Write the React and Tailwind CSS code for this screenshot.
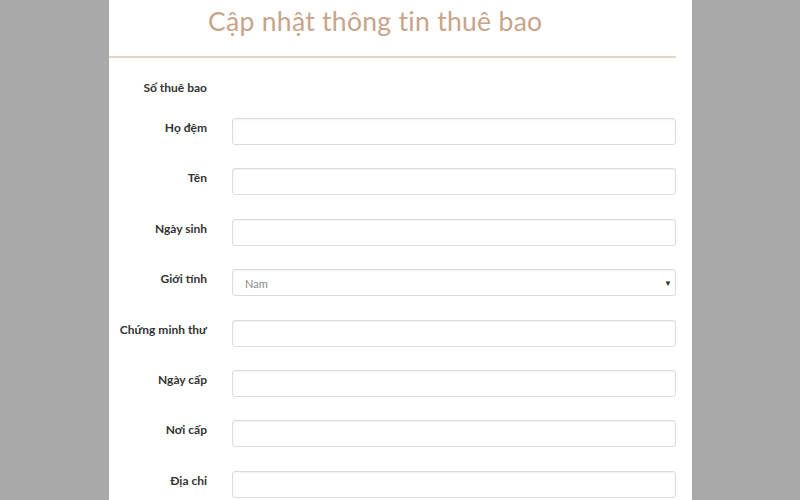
export default function App() {
  const fields = [
    "Họ đệm",
    "Tên",
    "Ngày sinh",
    "Giới tính",
    "Chứng minh thư",
    "Ngày cấp",
    "Nơi cấp",
    "Địa chỉ",
  ];

  return (
    <div className="w-[800px] h-[500px] overflow-hidden bg-[#a9a9a9] font-['Lato',sans-serif]">
      <div className="ml-[109px] w-[583px] h-full bg-white pr-[16px]">
        {/* Header */}
        <div className="h-[58px] border-b-[2px] border-[#e3d4c6] flex items-center pl-[99px] pb-[12px]">
          <h1 className="text-[26.5px] font-normal text-[#c8a48a] tracking-[0.3px]">
            Cập nhật thông tin thuê bao
          </h1>
        </div>

        {/* Form */}
        <div className="flex items-center h-[20px] mt-[20px]">
          <div className="w-[98px] text-right text-[12px] font-bold text-[#333]">
            Số thuê bao
          </div>
        </div>

        <div className="flex flex-col gap-[23.4px] mt-[20px]">
          {fields.map((label) => (
            <div key={label} className="flex items-start">
              <div className="w-[98px] text-right text-[12px] font-bold text-[#333] pt-[1px] whitespace-nowrap">
                {label}
              </div>
              <div className="ml-[25px] flex-1 h-[27px] border border-[#dcdcdc] rounded-[3px] shadow-[inset_0_1px_2px_rgba(0,0,0,0.06)] flex items-center justify-between pl-[12px] pr-[3px] pt-[3px]">
                {label === "Giới tính" && (
                  <>
                    <span className="text-[11px] text-[#888]">Nam</span>
                    <span className="text-[8px] text-[#333] -mt-[3px]">▼</span>
                  </>
                )}
              </div>
            </div>
          ))}
        </div>
      </div>
    </div>
  );
}
